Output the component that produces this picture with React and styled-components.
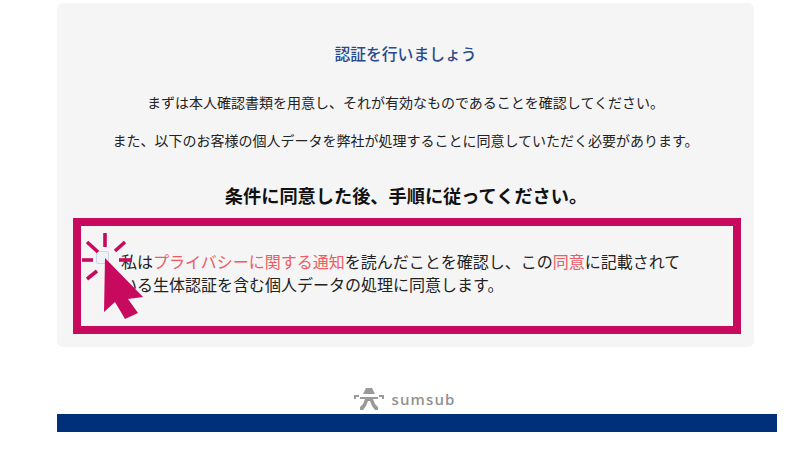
import React from 'react';
import styled, { createGlobalStyle } from 'styled-components';

const GlobalStyle = createGlobalStyle`
  html, body {
    margin: 0;
    padding: 0;
    background: #fff;
    font-family: "Noto Sans CJK JP", "Noto Sans", sans-serif;
  }
`;

const Page = styled.div`
  width: 800px;
  height: 450px;
  overflow: hidden;
  padding: 3px 23px 0 57px;
  box-sizing: border-box;
`;

const Card = styled.section`
  width: 697px;
  height: 344px;
  box-sizing: border-box;
  padding: 39px 13px 13px 16px;
  background: #f5f5f5;
  border-radius: 6px;
  display: flex;
  flex-direction: column;
  align-items: center;
`;

const Title = styled.h1`
  margin: 0;
  padding-right: 3px;
  font-size: 15.8px;
  line-height: 24px;
  font-weight: 500;
  color: #2b4a8b;
`;

const Paragraph = styled.p`
  margin: ${({ $top }) => $top}px 0 0;
  padding-right: 3px;
  font-size: 14px;
  line-height: 20px;
  color: #222;
  white-space: nowrap;
`;

const Notice = styled.h2`
  margin: 32px 0 0;
  padding-right: 2px;
  font-size: 18.2px;
  line-height: 26px;
  font-weight: 700;
  color: #111;
`;

const Frame = styled.div`
  position: relative;
  align-self: stretch;
  height: 116px;
  margin-top: 10px;
  box-sizing: border-box;
  border: 8px solid #c80a5f;
  padding: 24px 40px 0 40px;
`;

const Consent = styled.label`
  display: block;
  font-size: 16px;
  line-height: 23px;
  white-space: nowrap;
  color: #222;
`;

const PinkLink = styled.span`
  color: #ef5a64;
`;

const Checkbox = styled.span`
  position: absolute;
  left: 15px;
  top: 25px;
  width: 13px;
  height: 13px;
  box-sizing: border-box;
  background: #eef1f5;
  border: 1px solid #cfd5de;
  border-radius: 2px;
`;

const CursorMark = styled.svg`
  position: absolute;
  left: 3px;
  top: 0;
  overflow: visible;
`;

const Footer = styled.footer`
  width: 694px;
  height: 67px;
  box-sizing: border-box;
  padding-bottom: 3px;
  display: flex;
  align-items: flex-end;
  justify-content: center;
  gap: 7px;
`;

const Brand = styled.span`
  font-family: "Open Sans", "Noto Sans", sans-serif;
  font-size: 15px;
  line-height: 24px;
  font-weight: 600;
  letter-spacing: 1.1px;
  color: #929292;
`;

const Bar = styled.div`
  width: 720px;
  height: 18px;
  background: #00307a;
`;

const App = () => (
  <Page>
    <GlobalStyle />
    <Card>
      <Title>認証を行いましょう</Title>
      <Paragraph $top={26}>まずは本人確認書類を用意し、それが有効なものであることを確認してください。</Paragraph>
      <Paragraph $top={18}>また、以下のお客様の個人データを弊社が処理することに同意していただく必要があります。</Paragraph>
      <Notice>条件に同意した後、手順に従ってください。</Notice>
      <Frame>
        <Checkbox />
        <Consent>
          私は<PinkLink>プライバシーに関する通知</PinkLink>を読んだことを確認し、この<PinkLink>同意</PinkLink>に記載されて
          <br />
          いる生体認証を含む個人データの処理に同意します。
        </Consent>
        <CursorMark width="60" height="94" viewBox="0 0 60 94">
          <g stroke="#c80a5f" strokeWidth="3.6">
            <path d="M21 7V21" />
            <path d="M3 16L14 26" />
            <path d="M41 16L31 25" />
            <path d="M-2 34H9" />
            <path d="M35 34H48" />
            <path d="M3 53L13 45" />
          </g>
          <path d="M21 32L20 86L31 76L41 93L54 87L44 73L59 71Z" fill="#c80a5f" />
        </CursorMark>
      </Frame>
    </Card>
    <Footer>
      <svg width="32" height="24" viewBox="0 0 32 24" fill="#9a9a9a">
        <path d="M10 7L13 1H19L22 7Z" />
        <path d="M1 8H6V10H3V12H1Z" />
        <path d="M26 8H31V12H29V10H26Z" />
        <path d="M7 10H25V12H20L22 17L25 20V23H22L19 19L17 14H15L13 19L10 23H7V20L10 17L12 12H7Z" />
      </svg>
      <Brand>sumsub</Brand>
    </Footer>
    <Bar />
  </Page>
);

export default App;
